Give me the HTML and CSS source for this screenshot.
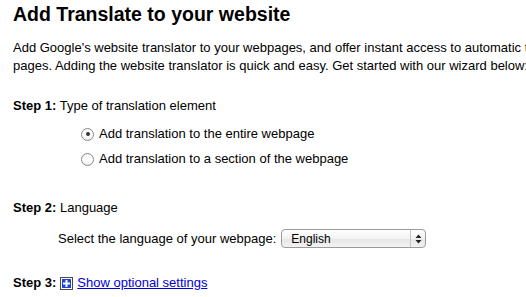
FILE: index.html
```html
<!DOCTYPE html>
<html lang="en">
<head>
  <meta charset="UTF-8">
  <title>Add Translate to your website</title>
  <link rel="stylesheet" href="styles.css">
</head>
<body>
  <main class="translate">
    <h1 class="title">Add Translate to your website</h1>
    <p class="intro">
      Add Google's website translator to your webpages, and offer instant access to automatic translation of the<br>
      pages. Adding the website translator is quick and easy. Get started with our wizard below:
    </p>

    <section class="step">
      <p class="step__head"><b>Step 1:</b> Type of translation element</p>
      <div class="step__body options">
        <label class="option"><span class="radio radio--on"></span>Add translation to the entire webpage</label>
        <label class="option"><span class="radio"></span>Add translation to a section of the webpage</label>
      </div>
    </section>

    <section class="step step--lang">
      <p class="step__head"><b>Step 2:</b> Language</p>
      <div class="step__body lang">
        <span>Select the language of your webpage:</span>
        <div class="select">
          <span class="select__value">English</span>
          <span class="select__arrows">
            <svg width="7" height="10" viewBox="0 0 7 10"><path d="M3.5 0.5L6.5 4H0.5Z M3.5 9.5L6.5 6H0.5Z" fill="#222"/></svg>
          </span>
        </div>
      </div>
    </section>

    <section class="step step--more">
      <p class="step__head">
        <b>Step 3:</b>
        <span class="plus">
          <svg width="13" height="13" viewBox="0 0 13 13">
            <rect x="0.5" y="0.5" width="12" height="12" fill="#fff" stroke="#4a4a4a"/>
            <rect x="2" y="2" width="9" height="9" fill="#1f45d6"/>
            <rect x="5.5" y="3" width="2" height="7" fill="#fff"/>
            <rect x="3" y="5.5" width="7" height="2" fill="#fff"/>
          </svg>
        </span>
        <a href="#" class="link">Show optional settings</a>
      </p>
    </section>
  </main>
</body>
</html>
```

FILE: styles.css
```css
html, body {
  margin: 0;
  background: #fff;
}
body {
  font-family: "Liberation Sans", Arial, sans-serif;
  font-size: 13px;
  color: #000;
  overflow: hidden;
}
.translate {
  padding: 0 13px;
  white-space: nowrap;
}
.title {
  font-size: 19.5px;
  font-weight: bold;
  margin: 0;
  padding-top: 2px;
  line-height: 24px;
}
.intro {
  margin: 13px 0 0;
  line-height: 18px;
}
.step {
  margin-top: 22px;
}
.step__head {
  margin: 0;
  line-height: 18px;
}
.step__body {
  padding-left: 45px;
}
.options {
  display: flex;
  flex-direction: column;
  gap: 7px;
  padding-left: 68px;
  margin-top: 10px;
}
.option {
  display: flex;
  align-items: center;
  gap: 5px;
  line-height: 18px;
}
.radio {
  width: 11px;
  height: 11px;
  border-radius: 50%;
  border: 1px solid #8a8a8a;
  background: linear-gradient(#f4f4f4, #fff 60%, #e9e9e9);
  display: flex;
  align-items: center;
  justify-content: center;
}
.radio--on::after {
  content: "";
  width: 4px;
  height: 4px;
  border-radius: 50%;
  background: #333;
}
.step--lang {
  margin-top: 31px;
}
.lang {
  display: flex;
  align-items: center;
  gap: 5px;
  margin-top: 12px;
}
.select {
  display: flex;
  align-items: center;
  width: 143px;
  height: 17px;
  border: 1px solid #9a9a9a;
  border-radius: 4px;
  background: linear-gradient(#fff, #f2f2f2 50%, #e6e6e6 51%, #f2f2f2);
  font-size: 12px;
}
.select__value {
  flex: 1;
  padding-left: 9px;
}
.select__arrows {
  display: flex;
  align-items: center;
  justify-content: center;
  width: 14px;
  height: 100%;
  border-left: 1px solid #c4c4c4;
}
.step--more {
  margin-top: 26px;
}
.step--more .step__head {
  display: flex;
  align-items: center;
  gap: 4px;
}
.plus {
  display: flex;
}
.link {
  color: #0000d8;
  text-decoration: underline;
}
```
